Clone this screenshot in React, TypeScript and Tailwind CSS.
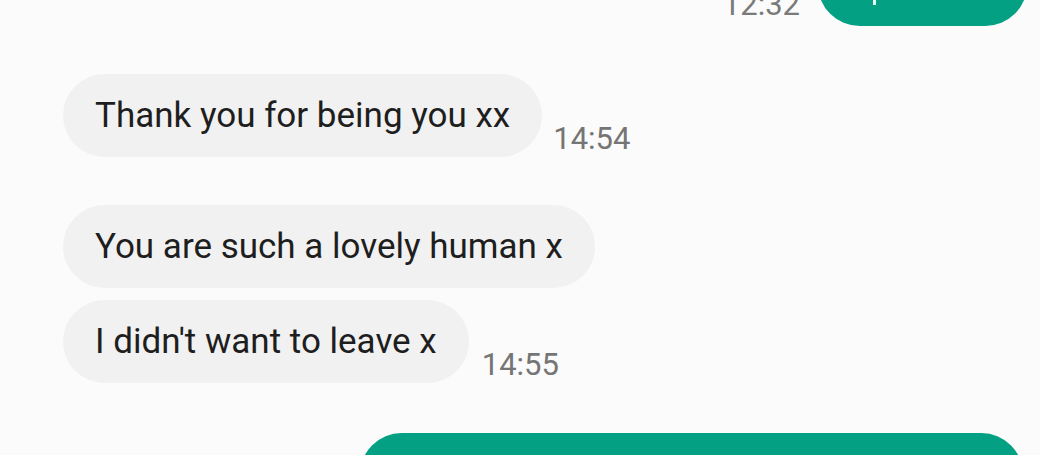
export default function App() {
  const font = { fontFamily: "Roboto, 'Noto Sans', sans-serif" };
  return (
    <div className="w-[1040px] h-[455px] overflow-hidden bg-[#fbfbfb] flex flex-col" style={font}>
      <div className="flex justify-end items-end mt-[-57px] pr-[13px]">
        <span className="text-[31px] leading-none text-[#7a7a7a] mb-[6px] mr-[18px]">12:32</span>
        <div className="relative w-[209px] h-[83px] rounded-[42px] bg-[#04a084]">
          <div className="absolute left-[55px] bottom-[21px] w-[3px] h-[26px] bg-[#e0faf5]" />
        </div>
      </div>

      <div className="flex items-end mt-[48px] ml-[63px]">
        <div className="h-[83px] rounded-[42px] bg-[#f1f1f1] flex items-center px-[32px] text-[35px] text-[#1e1e1e] leading-none whitespace-nowrap">
          Thank you for being you xx
        </div>
        <span className="ml-[11px] mb-[3px] text-[31px] leading-none text-[#757575]">14:54</span>
      </div>

      <div className="flex flex-col gap-[12px] mt-[48px] ml-[63px]">
        <div className="flex items-end">
          <div className="h-[83px] rounded-[42px] bg-[#f1f1f1] flex items-center px-[32px] text-[35px] text-[#1e1e1e] leading-none whitespace-nowrap">
            You are such a lovely human x
          </div>
        </div>
        <div className="flex items-end">
          <div className="h-[83px] rounded-[42px] bg-[#f1f1f1] flex items-center px-[32px] text-[35px] text-[#1e1e1e] leading-none whitespace-nowrap">
            I didn't want to leave x
          </div>
          <span className="ml-[13px] mb-[3px] text-[31px] leading-none text-[#757575]">14:55</span>
        </div>
      </div>

      <div className="flex justify-end mt-[50px] pr-[17px]">
        <div className="w-[663px] h-[83px] rounded-[42px] bg-[#04a084]" />
      </div>
    </div>
  );
}
